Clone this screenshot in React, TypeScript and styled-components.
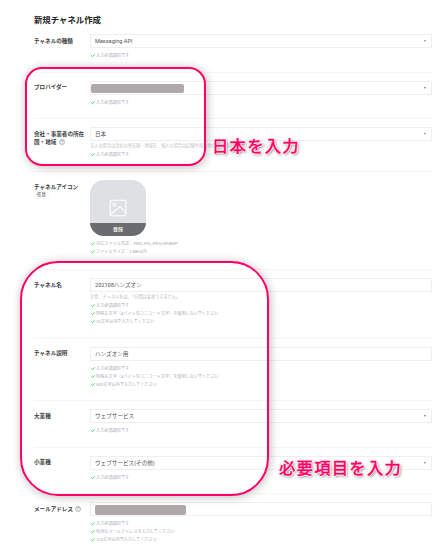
import React from "react";
import styled, { createGlobalStyle } from "styled-components";

const Global = createGlobalStyle`
  html, body { margin: 0; background: #fff; }
  * { box-sizing: border-box; }
  body { font-family: Roboto, "Noto Sans CJK JP", sans-serif; overflow: hidden; }
`;

const Page = styled.main`
  position: relative;
  width: 446px;
  height: 552px;
  padding: 13px 14px 0 34px;
  overflow: hidden;
  background: #fff;
`;

const Title = styled.h1`
  margin: 0;
  height: 13px;
  font-size: 8.4px;
  line-height: 14px;
  font-weight: 700;
  color: #262626;
  white-space: nowrap;
`;

const Row = styled.section<{ $height: number }>`
  display: grid;
  grid-template-columns: 56px 1fr;
  height: ${(p) => p.$height}px;
  padding-top: 8px;
  border-bottom: 1px solid #f6f6f6;
`;

const Label = styled.div`
  padding-top: 2.5px;
  font-size: 5.57px;
  line-height: 8.5px;
  font-weight: 700;
  color: #3a3d42;
  white-space: nowrap;
`;

const Optional = styled.span`
  display: block;
  width: 14px;
  height: 8px;
  margin: 0 0 0 0.5px;
  border-radius: 4px;
  background: #f8f8f8;
  font-size: 4.4px;
  line-height: 8px;
  font-weight: 400;
  text-align: center;
  color: #555;
`;

const HelpIcon = styled.svg`
  width: 6px;
  height: 6px;
  margin-left: 2.5px;
  vertical-align: -1px;
`;

const Field = styled.div`
  display: flex;
  align-items: center;
  justify-content: space-between;
  height: 14px;
  padding: 0 5px 0 4px;
  border: 1px solid #efefef;
  font-size: 5.6px;
  line-height: 12px;
  color: #50555b;
  white-space: nowrap;
`;

const Caret = styled.span`
  margin-left: auto;
  border: 1.5px solid transparent;
  border-top: 2px solid #858585;
  border-bottom: 0;
`;

const Redacted = styled.span<{ $width: number; $shift: number }>`
  width: ${(p) => p.$width}px;
  height: 9.5px;
  margin: 2px 0 0 ${(p) => p.$shift}px;
  border-radius: 2px;
  background: #afaaa9;
`;

const Note = styled.p`
  margin: 1px 0 -2.5px;
  font-size: 4.2px;
  line-height: 7px;
  color: #bcc0c7;
  white-space: nowrap;
`;

const Checks = styled.ul`
  margin: 4px 0 0;
  padding: 0 0 0 1px;
  list-style: none;
  font-size: 4.18px;
  line-height: 8px;
  color: #a9aeb7;
  white-space: nowrap;
`;

const CheckItem = styled.li`
  display: flex;
  align-items: center;
  gap: 1px;
  height: 8px;
`;

const Tick = styled.svg`
  width: 4px;
  height: 4px;
  transform: translateY(-0.5px);
`;

const Avatar = styled.div`
  display: flex;
  flex-direction: column;
  width: 56px;
  height: 56px;
  border-radius: 14px;
  overflow: hidden;
  background: #dfe0e4;
`;

const Picture = styled.svg`
  width: 18px;
  height: 18px;
  margin: 18.5px auto 0;
`;

const Register = styled.div`
  height: 13px;
  margin-top: auto;
  background: #6b6c6f;
  color: #f0f0f0;
  font-size: 5px;
  line-height: 13px;
  font-weight: 700;
  text-align: center;
`;

const Highlight = styled.div<{ $x: number; $y: number; $w: number; $h: number; $r: number }>`
  position: absolute;
  left: ${(p) => p.$x}px;
  top: ${(p) => p.$y}px;
  width: ${(p) => p.$w}px;
  height: ${(p) => p.$h}px;
  border: 2px solid #ff0066;
  border-radius: ${(p) => p.$r}px;
  box-shadow: 1px 1px 10px rgba(0, 0, 0, 0.27);
`;

const Callout = styled.div<{ $x: number; $y: number }>`
  position: absolute;
  left: ${(p) => p.$x}px;
  top: ${(p) => p.$y}px;
  font-family: "Noto Sans CJK JP", sans-serif;
  font-size: 16.4px;
  line-height: 20px;
  letter-spacing: 1.2px;
  font-weight: 500;
  color: #ff0066;
  -webkit-text-stroke: 0.3px #ff0066;
  white-space: nowrap;
  text-shadow: 1px 0 0 #fff, -1px 0 0 #fff, 0 1px 0 #fff, 0 -1px 0 #fff,
    1px 1px 3px rgba(0, 0, 0, 0.75);
`;

const Help = () => (
  <HelpIcon viewBox="0 0 12 12" fill="none" stroke="#666b72" strokeWidth="1">
    <circle cx="6" cy="6" r="5" />
    <path d="M4.3 4.8a1.7 1.7 0 1 1 2.5 1.5Q6 6.7 6 7.4M6 8.4v1" />
  </HelpIcon>
);

const CheckList = ({ items }: { items: string[] }) => (
  <Checks>
    {items.map((item) => (
      <CheckItem key={item}>
        <Tick viewBox="0 0 8 8" fill="none" stroke="#4fcb62" strokeWidth="1.9">
          <path d="M.6 4.2 3 6.4 7.4 1.6" />
        </Tick>
        {item}
      </CheckItem>
    ))}
  </Checks>
);

const REQUIRED = "入力必須項目です";
const CHARSET = "特殊な文字（4バイトのユニコード文字）を使用しないでください";

interface EntryProps {
  label: React.ReactNode;
  height: number;
  value?: React.ReactNode;
  select?: boolean;
  note?: string;
  checks: string[];
}

const Entry = ({ label, height, value, select, note, checks }: EntryProps) => (
  <Row $height={height}>
    <Label>{label}</Label>
    <div>
      <Field>
        {value}
        {select && <Caret />}
      </Field>
      {note && <Note>{note}</Note>}
      <CheckList items={checks} />
    </div>
  </Row>
);

export default function App() {
  return (
    <Page>
      <Global />
      <Title>新規チャネル作成</Title>
      <Entry label="チャネルの種類" height={46.5} value="Messaging API" select checks={[REQUIRED]} />
      <Entry
        label="プロバイダー"
        height={46.5}
        value={<Redacted $width={93} $shift={-4} />}
        select
        checks={[REQUIRED]}
      />
      <Entry
        label={<>会社・事業者の所在<br />国・地域<Help /></>}
        height={53}
        value="日本"
        select
        note="法人の場合は会社の所在国・地域を、個人の場合は店舗や居住地の国・地域を入力してください"
        checks={[REQUIRED]}
      />
      <Row $height={98}>
        <Label>
          チャネルアイコン
          <Optional>任意</Optional>
        </Label>
        <div>
          <Avatar>
            <Picture viewBox="0 0 18 18" fill="none" stroke="#fff" strokeWidth="1.1">
              <rect x="1.2" y="1.2" width="15.6" height="15.6" rx="1" />
              <circle cx="5.3" cy="5.7" r="1.4" />
              <path d="M1.5 15.5 11 7.5l5.5 6" />
            </Picture>
            <Register>登録</Register>
          </Avatar>
          <CheckList items={["対応ファイル形式：PNG,JPG,JPEG,GIF,BMP", "ファイルサイズ：3 MB以内"]} />
        </div>
      </Row>
      <Entry
        label="チャネル名"
        height={68.5}
        value="202108ハンズオン"
        note="注意：チャネル名は、7日間は変更できません。"
        checks={[REQUIRED, CHARSET, "20文字以内で入力してください"]}
      />
      <Entry
        label="チャネル説明"
        height={62.5}
        value="ハンズオン用"
        checks={[REQUIRED, CHARSET, "500文字以内で入力してください"]}
      />
      <Entry label="大業種" height={46.5} value="ウェブサービス" select checks={[REQUIRED]} />
      <Entry label="小業種" height={46.5} value="ウェブサービス(その他)" select checks={[REQUIRED]} />
      <Entry
        label={<>メールアドレス<Help /></>}
        height={62}
        value={<Redacted $width={91} $shift={0} />}
        checks={[REQUIRED, "有効なメールアドレスを入力してください", "100文字以内で入力してください"]}
      />
      <Highlight $x={25} $y={67} $w={181} $h={99} $r={17} />
      <Highlight $x={20} $y={261} $w={249} $h={235} $r={38} />
      <Callout $x={212} $y={135}>日本を入力</Callout>
      <Callout $x={279} $y={457}>必要項目を入力</Callout>
    </Page>
  );
}
